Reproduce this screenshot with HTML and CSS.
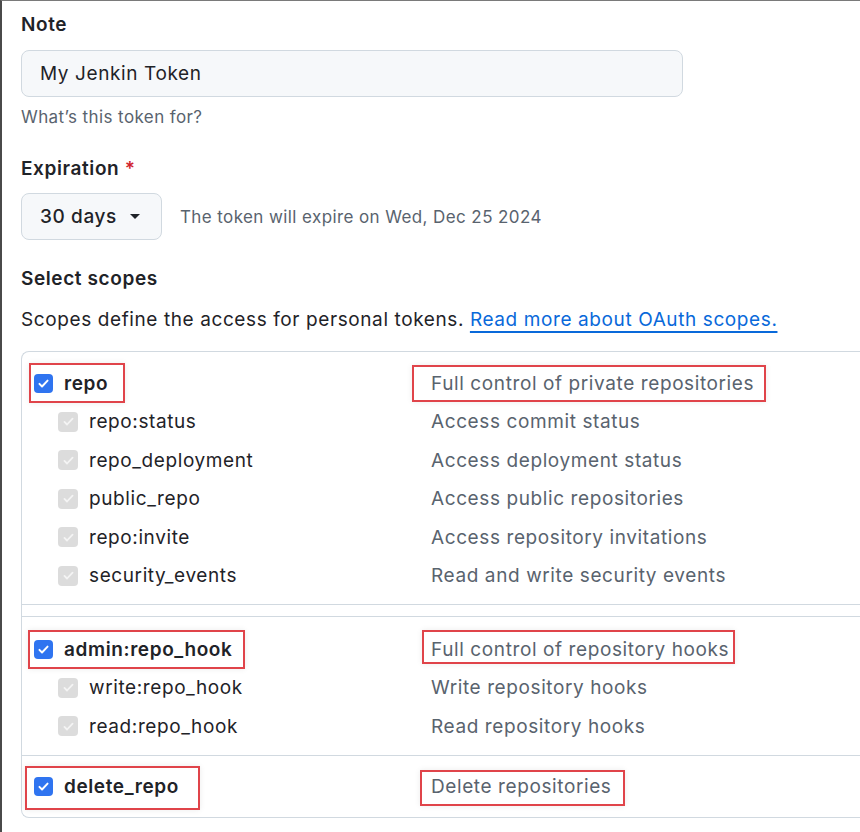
FILE: index.html
```html
<!DOCTYPE html>
<html lang="en">
<head>
    <meta charset="UTF-8">
    <meta name="viewport" content="width=device-width, initial-scale=1.0">
    <title>New personal access token</title>
    <link rel="stylesheet" href="styles.css">
</head>
<body>
    <div class="page">
        <div class="field">
            <label class="field-label" for="note">Note</label>
            <input type="text" id="note" class="text-input" value="My Jenkin Token">
            <p class="note-hint">What’s this token for?</p>
        </div>

        <div class="field">
            <div class="field-label">Expiration <span class="required">*</span></div>
            <div class="expire-row">
                <button type="button" class="select-btn">30 days <span class="caret"></span></button>
                <span class="expire-hint">The token will expire on Wed, Dec 25 2024</span>
            </div>
        </div>

        <div class="field">
            <div class="field-label scopes-title">Select scopes</div>
            <p class="scopes-intro">Scopes define the access for personal tokens. <a href="#">Read more about OAuth scopes.</a></p>
        </div>

        <div class="scopes">
            <div class="scope-group first">
                <div class="scope-row parent">
                    <span class="scope-name mark mark-repo"><span class="check on"></span>repo</span>
                    <span class="scope-desc mark mark-repo-desc">Full control of private repositories</span>
                </div>
                <div class="scope-row child">
                    <span class="scope-name"><span class="check off"></span>repo:status</span>
                    <span class="scope-desc">Access commit status</span>
                </div>
                <div class="scope-row child">
                    <span class="scope-name"><span class="check off"></span>repo_deployment</span>
                    <span class="scope-desc">Access deployment status</span>
                </div>
                <div class="scope-row child">
                    <span class="scope-name"><span class="check off"></span>public_repo</span>
                    <span class="scope-desc">Access public repositories</span>
                </div>
                <div class="scope-row child">
                    <span class="scope-name"><span class="check off"></span>repo:invite</span>
                    <span class="scope-desc">Access repository invitations</span>
                </div>
                <div class="scope-row child">
                    <span class="scope-name"><span class="check off"></span>security_events</span>
                    <span class="scope-desc">Read and write security events</span>
                </div>
            </div>

            <div class="scope-group hooks">
                <div class="scope-row parent">
                    <span class="scope-name mark mark-hook"><span class="check on"></span>admin:repo_hook</span>
                    <span class="scope-desc mark mark-hook-desc">Full control of repository hooks</span>
                </div>
                <div class="scope-row child">
                    <span class="scope-name"><span class="check off"></span>write:repo_hook</span>
                    <span class="scope-desc">Write repository hooks</span>
                </div>
                <div class="scope-row child">
                    <span class="scope-name"><span class="check off"></span>read:repo_hook</span>
                    <span class="scope-desc">Read repository hooks</span>
                </div>
            </div>

            <div class="scope-group last">
                <div class="scope-row parent">
                    <span class="scope-name mark mark-delete"><span class="check on"></span>delete_repo</span>
                    <span class="scope-desc mark mark-delete-desc">Delete repositories</span>
                </div>
            </div>
        </div>
    </div>
</body>
</html>
```

FILE: styles.css
```css
html, body {
    margin: 0;
    overflow: hidden;
}
body {
    font-family: Inter, "Liberation Sans", sans-serif;
    font-size: 19px;
    letter-spacing: 0.6px;
    color: #1f2328;
    background: #fff;
}
.page {
    height: 831px;
    border-top: 1px solid #7a7a7a;
    border-left: 2px solid #4a4a4a;
    padding: 11px 0 0 19px;
}

/* form fields */
.field-label {
    display: block;
    font-weight: 600;
    line-height: 26px;
    margin-bottom: 12px;
}
.required {
    color: #d1242f;
}
.text-input {
    box-sizing: border-box;
    width: 662px;
    height: 47px;
    padding: 0 18px;
    font: inherit;
    letter-spacing: inherit;
    color: #1f2328;
    background: #f6f8fa;
    border: 1px solid #d1d9e0;
    border-radius: 8px;
}
.note-hint {
    margin: 9px 0 28px;
    font-size: 17px;
    letter-spacing: 0.4px;
    line-height: 22px;
    color: #59636e;
}
.expire-row {
    display: flex;
    align-items: center;
    gap: 18px;
    margin-top: -1px;
}
.select-btn {
    display: flex;
    align-items: center;
    gap: 13px;
    box-sizing: border-box;
    width: 141px;
    height: 47px;
    padding: 0 18px;
    font: inherit;
    font-weight: 500;
    letter-spacing: inherit;
    color: #1f2328;
    background: #f6f8fa;
    border: 1px solid #d1d9e0;
    border-radius: 8px;
}
.caret {
    width: 0;
    height: 0;
    border-left: 5px solid transparent;
    border-right: 5px solid transparent;
    border-top: 5px solid #1f2328;
}
.expire-hint {
    font-size: 17px;
    letter-spacing: 0.4px;
    color: #59636e;
}
.scopes-title {
    margin-top: 26px;
    margin-bottom: 15px;
}
.scopes-intro {
    margin: 0 0 18px;
    line-height: 26px;
}
.scopes-intro a {
    color: #0969da;
    text-decoration: underline;
    text-underline-offset: 5px;
    text-decoration-thickness: 2px;
}

/* scope table, cut off by the right edge of the window */
.scopes {
    border: 1px solid #d1d9e0;
    border-right: 0;
    border-radius: 8px 0 0 8px;
}
.scope-group {
    padding: 12px 12px 9px;
    border-bottom: 1px solid #d1d9e0;
}
.scope-group.hooks {
    margin-top: 11px;
    border-top: 1px solid #d1d9e0;
    padding-top: 13px;
}
.scope-group.last {
    border-bottom: 0;
    padding-bottom: 11px;
}
.scope-row {
    display: grid;
    grid-template-columns: 397px 1fr;
    height: 38.5px;
    align-items: center;
}
.scope-name {
    display: inline-flex;
    align-items: center;
    gap: 11px;
    justify-self: start;
}
.parent .scope-name {
    font-weight: 600;
}
.child .scope-name {
    padding-left: 24px;
}
.scope-desc {
    justify-self: start;
    color: #59636e;
}
.check {
    box-sizing: border-box;
    width: 19px;
    height: 19px;
    border-radius: 4px;
    background-repeat: no-repeat;
    background-position: center;
    background-size: 13px 13px;
}
.check.on {
    background-color: #2f74f0;
    background-image: url("data:image/svg+xml,%3Csvg xmlns='http://www.w3.org/2000/svg' viewBox='0 0 16 16'%3E%3Cpath d='M3 8.5l3.2 3.2L13 4.5' fill='none' stroke='%23fff' stroke-width='2.4' stroke-linecap='round' stroke-linejoin='round'/%3E%3C/svg%3E");
}
.check.off {
    width: 20px;
    height: 20px;
    background-color: #dcdcdc;
    background-image: url("data:image/svg+xml,%3Csvg xmlns='http://www.w3.org/2000/svg' viewBox='0 0 16 16'%3E%3Cpath d='M3 8.5l3.2 3.2L13 4.5' fill='none' stroke='%23f4f4f4' stroke-width='2.2' stroke-linecap='round' stroke-linejoin='round'/%3E%3C/svg%3E");
}

/* red annotation boxes */
.mark {
    position: relative;
    height: 100%;
}
.mark::after {
    content: "";
    position: absolute;
    border: 2px solid #e0444a;
    box-shadow: 0 0 6px rgba(0, 0, 0, 0.08);
}
.mark-repo::after {
    top: -1px; bottom: 0; left: -5px; right: -17px;
}
.mark-repo-desc {
    display: inline-flex;
    align-items: center;
}
.mark-repo-desc::after {
    top: 1px; bottom: 1px; left: -19px; right: -12px;
}
.mark-hook::after {
    top: 0; bottom: 0; left: -6px; right: -13px;
}
.mark-hook-desc {
    display: inline-flex;
    align-items: center;
}
.mark-hook-desc::after {
    top: 0; bottom: 5px; left: -9px; right: -6px;
}
.mark-delete::after {
    top: -2px; bottom: -4px; left: -9px; right: -21px;
}
.mark-delete-desc {
    display: inline-flex;
    align-items: center;
}
.mark-delete-desc::after {
    top: 2px; bottom: 0; left: -11px; right: -14px;
}
```
